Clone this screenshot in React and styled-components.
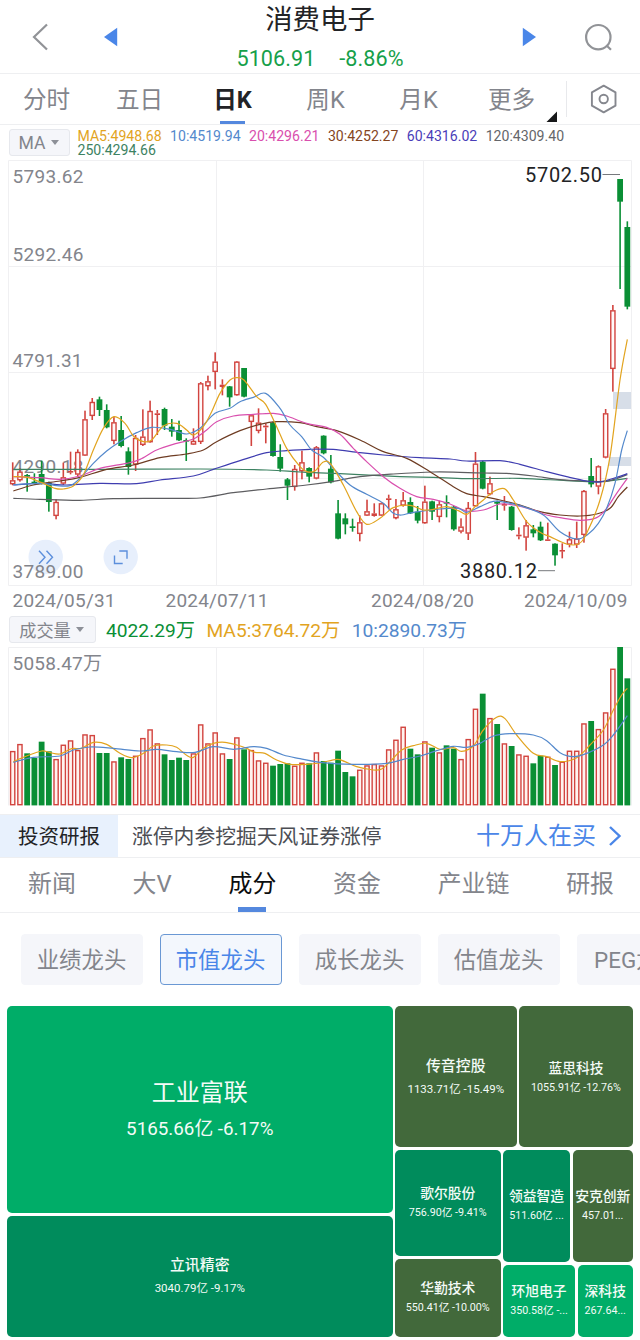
import React from "react";
import styled, { createGlobalStyle } from "styled-components";

const GlobalStyle = createGlobalStyle`
  * { box-sizing: border-box; }
  body {
    margin: 0;
    background: #fff;
    font-family: Roboto, "Noto Sans CJK SC", sans-serif;
    color: #222326;
    overflow: hidden;
  }
`;

const RED = "#d2443f";
const GREEN = "#0a8f35";
const GREY = "#83858c";
const BLUE = "#4a86e8";
const LINE = "#eeeff1";

const Page = styled.main`
  width: 640px;
  height: 1340px;
  overflow: hidden;
  display: flex;
  flex-direction: column;
  background: #fff;
  white-space: nowrap;
`;

/* ---------- header ---------- */
const Header = styled.header`
  height: 74px;
  flex: none;
  display: flex;
  align-items: center;
  border-bottom: 1px solid ${LINE};
`;
const HeaderIcon = styled.svg`
  flex: none;
  display: block;
  width: ${(p) => p.$w}px;
  height: 72px;
`;
const Heading = styled.div`
  flex: 1;
  height: 73px;
  display: flex;
  flex-direction: column;
  align-items: center;
`;
const Title = styled.h1`
  margin: 0;
  font-size: 27.4px;
  line-height: 41px;
  font-weight: 400;
`;
const Quote = styled.div`
  display: flex;
  gap: 24px;
  padding-top: 4px;
  font-size: 21.6px;
  line-height: 28px;
  letter-spacing: 0.05px;
  color: #16a04a;
`;

/* ---------- period tabs ---------- */
const Periods = styled.nav`
  height: 51px;
  flex: none;
  display: flex;
  border-bottom: 1px solid ${LINE};
`;
const Period = styled.div`
  width: 93px;
  display: flex;
  flex-direction: column;
  align-items: center;
  justify-content: space-between;
  font-size: 23.6px;
  line-height: 47px;
  padding-top: 2.6px;
  height: 50px;
  font-weight: ${(p) => (p.$active ? 700 : 400)};
  color: ${(p) => (p.$active ? "#222326" : GREY)};
  &::after {
    content: "";
    width: 25px;
    height: 3px;
    flex: none;
    margin-top: -2.6px;
    background: ${(p) => (p.$active ? "#5488de" : "transparent")};
  }
`;
const PeriodTools = styled.svg`
  display: block;
  width: 96px;
  height: 50px;
  margin-left: -14px;
`;

/* ---------- indicator legends ---------- */
const Legend = styled.div`
  height: ${(p) => p.$h}px;
  flex: none;
  display: flex;
  align-items: flex-start;
  padding: ${(p) => p.$pad};
  gap: ${(p) => p.$gap}px;
`;
const Picker = styled.button`
  flex: none;
  width: ${(p) => p.$w}px;
  height: 27px;
  padding: 0 2px 0 0;
  display: flex;
  align-items: center;
  justify-content: center;
  gap: 5px;
  border: 1px solid #e6e8ed;
  border-radius: 3px;
  background: #f5f6fa;
  font: ${(p) => p.$size}px Roboto, "Noto Sans CJK SC", sans-serif;
  color: ${GREY};
  &::after {
    content: "";
    border: 4.5px solid transparent;
    border-top: 5px solid #8d9098;
    border-bottom: 0;
  }
`;
const Averages = styled.div`
  flex: 1;
  display: flex;
  flex-wrap: wrap;
  column-gap: ${(p) => p.$gap}px;
  font-size: ${(p) => p.$size}px;
  line-height: ${(p) => p.$lh}px;
`;
const Average = styled.span`
  color: ${(p) => p.$c};
`;

const Chart = styled.svg`
  display: block;
  flex: none;
  width: 640px;
  height: ${(p) => p.$h}px;
  font-size: 19px;
`;

/* ---------- promo strip ---------- */
const Promo = styled.section`
  height: 44px;
  flex: none;
  display: flex;
  align-items: stretch;
  border-top: 1px solid ${LINE};
  border-bottom: 1px solid ${LINE};
  line-height: 43px;
`;
const PromoTag = styled.div`
  width: 118px;
  padding-top: 1px;
  text-align: center;
  background: #e8f1fd;
  font-size: 20.5px;
`;
const PromoText = styled.div`
  flex: 1;
  padding: 1px 0 0 14px;
  font-size: 20.8px;
  color: #4c4e54;
`;
const PromoLink = styled.div`
  display: flex;
  align-items: center;
  gap: 12px;
  padding-right: 18px;
  font-size: 24px;
  line-height: 40px;
  color: ${BLUE};
`;

/* ---------- section tabs ---------- */
const Sections = styled.nav`
  height: 55px;
  flex: none;
  display: flex;
  justify-content: space-between;
  padding: 0 26px 0 28px;
  border-bottom: 1px solid ${LINE};
`;
const Section = styled.div`
  display: flex;
  flex-direction: column;
  align-items: center;
  justify-content: space-between;
  font-size: 23.9px;
  line-height: 49px;
  padding-top: 1.5px;
  height: 54px;
  color: ${(p) => (p.$active ? "#0c0d0e" : GREY)};
  &::after {
    content: "";
    width: 28px;
    height: 5px;
    flex: none;
    margin-top: -1.5px;
    background: ${(p) => (p.$active ? "#5488de" : "transparent")};
  }
`;

/* ---------- filter chips ---------- */
const Chips = styled.div`
  height: 93px;
  flex: none;
  display: flex;
  gap: 17px;
  padding: 21px 0 0 21px;
  overflow: hidden;
`;
const Chip = styled.div`
  flex: none;
  width: 122px;
  height: 51px;
  padding-right: 1px;
  text-align: center;
  font-size: 22.4px;
  line-height: 51px;
  border-radius: 4px;
  border: 1px solid ${(p) => (p.$active ? "#6a98d4" : "#f5f6fa")};
  background: ${(p) => (p.$active ? "#f3f7fd" : "#f5f6fa")};
  color: ${(p) => (p.$active ? BLUE : GREY)};
`;

/* ---------- heat map ---------- */
const HeatMap = styled.section`
  flex: none;
  height: 330.5px;
  margin: 0 7px;
  display: flex;
  gap: 2.5px;
`;
const Column = styled.div`
  display: flex;
  flex-direction: column;
  gap: 2.5px;
  ${(p) => (p.$w ? `width: ${p.$w}px; flex: none;` : "flex: 1; min-width: 0;")}
`;
const Row = styled.div`
  display: flex;
  gap: 2.5px;
  ${(p) => (p.$h ? `height: ${p.$h}px; flex: none;` : "flex: 1; min-height: 0;")}
`;
const tones = { light: "#00ad68", mid: "#008c5c", dark: "#42693b" };
const TileBox = styled.div`
  ${(p) => (p.$w ? `width: ${p.$w}px;` : "")}
  ${(p) => (p.$h ? `height: ${p.$h}px;` : "")}
  flex: ${(p) => (p.$w || p.$h ? "none" : 1)};
  min-width: 0;
  display: flex;
  flex-direction: column;
  align-items: center;
  justify-content: center;
  overflow: hidden;
  border-radius: 5px;
  padding-top: ${(p) => p.$drop}px;
  background: ${(p) => tones[p.$tone]};
  color: #f4fbf7;
`;
const TileName = styled.div`
  font-size: ${(p) => p.$size}px;
  line-height: ${(p) => p.$size * 1.45}px;
  font-weight: ${(p) => (p.$size > 20 ? 400 : 500)};
`;
const TileInfo = styled.div`
  font-size: ${(p) => p.$size}px;
  line-height: ${(p) => p.$size * 1.95}px;
`;

function Tile({ name, info, tone, w, h, size = 13.8, small = 10.7, drop = 2 }) {
  return (
    <TileBox $tone={tone} $w={w} $h={h} $drop={drop}>
      <TileName $size={size}>{name}</TileName>
      <TileInfo $size={small}>{info}</TileInfo>
    </TileBox>
  );
}

/* ---------- chart data ----------
   Each candle: direction, high, body top, body bottom, low, volume top.
   Values are in thirds of a pixel. */
const candles = [
  ["r", 367, 421, 432, 436, 423], ["r", 385, 395, 420, 425, 402], ["g", 402, 405, 410, 455, 430],
  ["g", 400, 425, 432, 433, 444], ["g", 362, 402, 428, 433, 395], ["g", 425, 428, 486, 515, 424],
  ["r", 478, 486, 527, 538, 447], ["r", 368, 412, 430, 435, 404], ["r", 335, 393, 397, 403, 391],
  ["r", 328, 336, 403, 410, 420], ["r", 212, 238, 346, 348, 373], ["r", 174, 186, 227, 240, 375],
  ["g", 170, 178, 210, 228, 429], ["g", 193, 210, 262, 265, 429], ["r", 230, 247, 302, 313, 454],
  ["g", 228, 270, 318, 322, 442], ["g", 322, 334, 381, 404, 447], ["r", 285, 294, 373, 393, 437],
  ["r", 208, 290, 314, 318, 384], ["r", 182, 213, 306, 308, 358], ["r", 210, 220, 225, 285, 400],
  ["g", 203, 207, 257, 270, 433], ["g", 237, 260, 275, 290, 450], ["g", 242, 270, 301, 303, 443],
  ["g", 295, 300, 303, 363, 450], ["r", 265, 303, 313, 315, 430], ["r", 126, 130, 305, 312, 343],
  ["r", 107, 124, 138, 151, 400], ["r", 37, 65, 95, 148, 367], ["r", 118, 134, 141, 166, 430],
  ["g", 138, 139, 172, 200, 447], ["r", 63, 65, 165, 167, 382], ["g", 84, 84, 170, 172, 418],
  ["r", 222, 226, 245, 318, 420], ["r", 205, 248, 272, 280, 451], ["r", 250, 257, 262, 310, 458],
  ["g", 245, 248, 348, 350, 467], ["g", 313, 351, 386, 395, 462], ["g", 414, 418, 437, 480, 460],
  ["r", 375, 387, 440, 452, 467], ["r", 332, 367, 393, 418, 458], ["g", 382, 384, 410, 427, 460],
  ["r", 318, 322, 415, 418, 427], ["g", 286, 287, 340, 343, 453], ["g", 345, 386, 427, 430, 458],
  ["g", 480, 520, 596, 598, 422], ["g", 520, 535, 553, 583, 486], ["g", 536, 559, 564, 575, 499],
  ["r", 526, 547, 581, 604, 479], ["r", 479, 514, 526, 528, 466], ["r", 490, 520, 528, 530, 462],
  ["r", 487, 490, 526, 528, 466], ["r", 464, 475, 480, 508, 418], ["r", 477, 508, 534, 538, 389],
  ["r", 456, 481, 496, 500, 350], ["g", 472, 486, 520, 522, 416], ["g", 498, 515, 542, 550, 433],
  ["r", 437, 485, 549, 551, 394], ["g", 482, 484, 515, 540, 413], ["r", 482, 493, 530, 547, 427],
  ["g", 466, 486, 491, 532, 406], ["g", 498, 500, 568, 572, 416], ["r", 535, 560, 574, 580, 447],
  ["r", 486, 504, 580, 600, 387], ["r", 336, 371, 498, 500, 296], ["g", 362, 365, 446, 448, 251],
  ["r", 410, 430, 462, 466, 324], ["g", 482, 486, 491, 540, 342], ["r", 468, 492, 497, 512, 400],
  ["g", 498, 500, 570, 572, 408], ["r", 562, 584, 589, 598, 433], ["r", 540, 556, 592, 632, 437],
  ["g", 555, 568, 580, 592, 460], ["g", 545, 560, 601, 603, 437], ["r", 548, 598, 602, 603, 440],
  ["g", 610, 611, 646, 677, 465], ["r", 610, 630, 634, 655, 455], ["r", 575, 598, 613, 622, 422],
  ["r", 545, 596, 613, 624, 422], ["r", 450, 453, 584, 608, 340], ["g", 354, 408, 433, 442, 333],
  ["r", 376, 379, 439, 463, 357], ["r", 207, 220, 352, 355, 307], ["r", -105, -89, 86, 155, 176],
  ["g", -483, -483, -415, -153, 111], ["g", -356, -339, -100, -92, 205],
];

const priceLines = [
  ["#3d8262", [40,388,300,388,600,387,800,390,900,396,1020,401,1200,410,1300,412,1400,416,1560,415,1700,422,1800,425,1882,415]],
  ["#5d5d60", [40,475,120,478,240,481,340,476,480,475,600,474,700,458,800,447,920,435,1000,424,1080,410,1180,402,1300,396,1380,397,1450,399,1520,400,1600,408,1680,419,1760,423,1820,424,1882,404]],
  ["#3f3db0", [40,435,120,430,200,435,300,430,410,431,480,420,580,408,640,388,720,362,800,338,860,332,930,328,1000,328,1080,338,1150,345,1260,353,1350,357,1400,363,1500,362,1560,373,1640,395,1700,410,1760,423,1800,426,1850,412,1882,401]],
  ["#6e3c23", [40,453,100,435,180,423,240,412,320,388,400,375,480,353,560,342,610,330,650,305,720,272,780,253,830,245,900,248,950,260,1010,272,1080,300,1150,335,1220,355,1290,395,1360,440,1400,461,1450,470,1500,480,1560,495,1620,515,1680,525,1740,528,1790,522,1830,505,1855,470,1882,441]],
  ["#d94fae", [40,410,120,413,180,418,240,408,300,385,380,370,420,358,470,330,530,310,580,297,620,270,650,245,700,228,760,223,820,220,860,228,920,250,980,262,1020,283,1060,325,1100,365,1150,410,1200,445,1250,470,1300,478,1350,492,1400,513,1450,510,1500,492,1540,495,1600,510,1640,525,1680,533,1740,541,1790,533,1820,505,1850,460,1882,415]],
  ["#5489cc", [40,434,125,430,170,437,210,437,240,415,280,370,320,333,360,305,410,278,455,262,510,268,560,282,600,265,645,220,690,205,720,185,760,172,797,160,840,205,870,255,905,290,935,330,970,352,1000,385,1050,435,1100,463,1150,490,1180,520,1205,525,1240,517,1320,507,1375,505,1400,517,1440,500,1480,484,1520,488,1570,500,1630,525,1680,575,1730,597,1765,582,1795,550,1820,505,1845,430,1865,330,1882,272]],
  ["#e2a41f", [40,410,82,412,125,428,165,445,190,447,220,438,250,405,280,330,310,265,342,230,375,250,400,288,430,305,455,300,490,258,530,250,560,270,581,285,612,257,635,215,660,160,690,120,710,113,732,120,770,170,797,193,830,260,860,325,900,380,920,395,945,393,970,366,992,372,1030,435,1070,515,1100,553,1140,535,1180,503,1230,496,1270,510,1300,508,1340,500,1375,512,1400,523,1425,500,1450,480,1480,455,1513,446,1540,480,1580,545,1620,577,1650,590,1700,612,1735,612,1760,580,1800,480,1830,350,1860,120,1882,-2]],
];

const volumeLines = [
  ["#e2a41f", [40,455,80,438,125,423,150,428,180,432,215,416,245,415,280,397,320,403,360,430,395,443,430,430,460,408,500,405,530,412,560,436,580,442,610,415,640,400,675,397,710,405,740,415,765,427,795,430,830,450,870,463,920,463,960,459,1010,448,1035,455,1070,470,1120,480,1145,477,1170,455,1205,420,1240,407,1280,400,1320,418,1360,413,1385,424,1420,408,1450,360,1490,322,1515,326,1550,375,1600,430,1640,440,1680,455,1730,443,1770,405,1810,360,1840,300,1865,255,1882,235]],
  ["#5489cc", [40,457,100,442,180,438,220,420,270,411,340,415,420,423,470,418,530,425,585,427,640,410,700,418,760,410,800,415,850,435,900,446,960,457,1060,463,1160,460,1210,448,1260,438,1310,422,1360,409,1400,412,1440,400,1480,378,1530,371,1600,375,1640,392,1680,428,1720,440,1760,430,1810,405,1840,375,1882,317]],
];

const xAt = (i) => 12.7 + i * 7.231;

/* Catmull-Rom curve through flat x,y pairs */
function curve(flat, dy) {
  const pts = [];
  for (let i = 0; i < flat.length; i += 2) pts.push([flat[i] / 3, flat[i + 1] / 3 + dy]);
  const f = (n) => n.toFixed(2);
  let d = `M${f(pts[0][0])} ${f(pts[0][1])}`;
  for (let i = 0; i < pts.length - 1; i++) {
    const a = pts[i - 1] || pts[i];
    const b = pts[i];
    const c = pts[i + 1];
    const e = pts[i + 2] || c;
    d += `C${f(b[0] + (c[0] - a[0]) / 6)} ${f(b[1] + (c[1] - a[1]) / 6)} ${f(c[0] - (e[0] - b[0]) / 6)} ${f(c[1] - (e[1] - b[1]) / 6)} ${f(c[0])} ${f(c[1])}`;
  }
  return d;
}

function Candle({ x, data }) {
  const [dir, high, top, bottom, low] = data;
  const y = (v) => 180 + v / 3;
  const h = Math.max((bottom - top) / 3, 1.6);
  if (dir === "g") {
    return (
      <g fill={GREEN}>
        <rect x={x - 0.8} y={y(high)} width="1.6" height={(low - high) / 3} />
        <rect x={x - 2.9} y={y(top)} width="5.8" height={h} />
      </g>
    );
  }
  return (
    <g fill={RED}>
      <rect x={x - 0.8} y={y(high)} width="1.6" height={Math.max((top - high) / 3, 0)} />
      <rect x={x - 0.8} y={y(bottom)} width="1.6" height={Math.max((low - bottom) / 3, 0)} />
      {h < 3 ? (
        <rect x={x - 2.7} y={y(top)} width="5.4" height={h} />
      ) : (
        <rect x={x - 2.1} y={y(top) + 0.5} width="4.2" height={h - 0.8} fill="#fffafa" stroke={RED} strokeWidth="1.4" />
      )}
    </g>
  );
}

function PriceChart() {
  return (
    <Chart $h={455}>
      <g stroke="#f0f0f2" strokeWidth="1" fill="none">
        <path d="M8.5 .5H631.5V425.5H8.5ZM8.5 106.5H631M8.5 212.5H631M8.5 318.5H631M216.5 .5V425M423.5 .5V425" />
      </g>
      <g fill="#d7dee8">
        <rect x="613" y="232" width="18" height="17" />
        <rect x="609" y="297" width="22" height="9" />
      </g>
      <circle cx="45.7" cy="397" r="17.2" fill="#e7effc" />
      <circle cx="120.7" cy="397" r="17.2" fill="#e7effc" />
      <g fill="none" stroke="#5c8fdc" strokeWidth="1.4">
        <path d="M39 390.7l6 6.5-6 6.5M46.5 390.7l6 6.5-6 6.5" />
        <path d="M119.3 391h7.7v7.7M114.5 395.5v8h8.2" />
      </g>
      <g fill={GREY}>
        <text x="12.5" y="23.3" textLength="71">5793.62</text>
        <text x="12.5" y="101" textLength="71">5292.46</text>
        <text x="12.5" y="206.7" textLength="70">4791.31</text>
        <text x="12.5" y="312.7" textLength="71">4290.18</text>
        <text x="12.5" y="418.4" textLength="71">3789.00</text>
        <text x="12.5" y="447.4" textLength="103">2024/05/31</text>
        <text x="165.5" y="447.4" textLength="103">2024/07/11</text>
        <text x="371" y="447.4" textLength="103">2024/08/20</text>
        <text x="524" y="447.4" textLength="103.5">2024/10/09</text>
      </g>
      {candles.map((c, i) => (
        <Candle key={i} x={xAt(i)} data={c} />
      ))}
      <g fill="none" strokeWidth="1.2" strokeLinejoin="round">
        {priceLines.map(([color, pts]) => (
          <path key={color} d={curve(pts, 180)} stroke={color} />
        ))}
      </g>
      <path d="M602.5 14.5H620M538 410.7H555" stroke="#77797d" strokeWidth="1" />
      <g fill="#222326" fontSize="20">
        <text x="525" y="22.3" textLength="77">5702.50</text>
        <text x="460" y="418.4" textLength="77">3880.12</text>
      </g>
    </Chart>
  );
}

function VolumeChart() {
  return (
    <Chart $h={167}>
      <path d="M8.5 158.5V.5H631.5V158.5M216.5 .5V158M423.5 .5V158" stroke="#f0f0f2" fill="none" />
      <text x="12.5" y="23.3" fill={GREY} textLength="89.5">5058.47万</text>
      {candles.map((c, i) => {
        const x = xAt(i);
        const y = c[5] / 3 - 37;
        return c[0] === "g" ? (
          <rect key={i} x={x - 2.9} y={y} width="5.8" height={158.4 - y} fill={GREEN} />
        ) : (
          <rect key={i} x={x - 2.1} y={y + 0.6} width="4.2" height={157.1 - y} fill="#fff3ef" stroke={RED} strokeWidth="1.4" />
        );
      })}
      <g fill="none" strokeWidth="1.2">
        {volumeLines.map(([color, pts]) => (
          <path key={color} d={curve(pts, -37)} stroke={color} />
        ))}
      </g>
    </Chart>
  );
}

const periods = ["分时", "五日", "日K", "周K", "月K", "更多"];
const sections = ["新闻", "大V", "成分", "资金", "产业链", "研报"];
const chips = ["业绩龙头", "市值龙头", "成长龙头", "估值龙头", "PEG龙头"];
const priceAverages = [
  ["#e2a41f", "MA5:4948.68"],
  ["#5489cc", "10:4519.94"],
  ["#d94fae", "20:4296.21"],
  ["#84451f", "30:4252.27"],
  ["#4a3db8", "60:4316.02"],
  ["#65666a", "120:4309.40"],
  ["#3d8262", "250:4294.66"],
];
const volumeAverages = [
  [GREEN, "4022.29万"],
  ["#e2a41f", "MA5:3764.72万"],
  ["#5489cc", "10:2890.73万"],
];

export default function App() {
  return (
    <Page>
      <GlobalStyle />
      <Header>
        <HeaderIcon $w={130} viewBox="0 0 130 72">
          <path d="M47 23.5L34 36l13 12.5" fill="none" stroke="#919397" strokeWidth="2.2" />
          <path d="M104 36l13.2-9.2v18.4z" fill={BLUE} />
        </HeaderIcon>
        <Heading>
          <Title>消费电子</Title>
          <Quote>
            <span>5106.91</span>
            <span>-8.86%</span>
          </Quote>
        </Heading>
        <HeaderIcon $w={130} viewBox="0 0 130 72">
          <path d="M26 36l-13.2-9.2v18.4z" fill={BLUE} />
          <g fill="none" stroke="#919397" strokeWidth="2.2">
            <circle cx="88.3" cy="36.2" r="12.2" />
            <path d="M96.5 44.5l4.5 4.2" />
          </g>
        </HeaderIcon>
      </Header>

      <Periods>
        {periods.map((p) => (
          <Period key={p} $active={p === "日K"}>{p}</Period>
        ))}
        <PeriodTools viewBox="0 0 96 50">
          <path d="M13 37.5V48H2.5z" fill="#17181a" />
          <path d="M22.5 7v36" stroke="#e8e9ec" />
          <g fill="none" stroke="#85878e" strokeWidth="1.9" strokeLinejoin="round">
            <path d="M59.7 11.7l11.8 6.6v13.4l-11.8 6.7-11.8-6.7V18.3z" />
            <circle cx="59.7" cy="25" r="4.2" />
          </g>
        </PeriodTools>
      </Periods>

      <Legend $h={35} $pad="4px 0 0 9px" $gap={7.5}>
        <Picker $w={61} $size={17.6}>MA</Picker>
        <Averages $gap={8.4} $size={14.1} $lh={14}>
          {priceAverages.map(([c, t]) => (
            <Average key={t} $c={c}>{t}</Average>
          ))}
        </Averages>
      </Legend>
      <PriceChart />

      <Legend $h={32} $pad="1px 0 0 9px" $gap={10}>
        <Picker $w={87} $size={17.2}>成交量</Picker>
        <Averages $gap={11.5} $size={19.2} $lh={29}>
          {volumeAverages.map(([c, t]) => (
            <Average key={t} $c={c}>{t}</Average>
          ))}
        </Averages>
      </Legend>
      <VolumeChart />

      <Promo>
        <PromoTag>投资研报</PromoTag>
        <PromoText>涨停内参挖掘天风证券涨停</PromoText>
        <PromoLink>
          十万人在买
          <svg width="14" height="22" viewBox="0 0 14 22">
            <path d="M2 2l9.5 9L2 20" fill="none" stroke={BLUE} strokeWidth="2.4" />
          </svg>
        </PromoLink>
      </Promo>

      <Sections>
        {sections.map((s) => (
          <Section key={s} $active={s === "成分"}>{s}</Section>
        ))}
      </Sections>

      <Chips>
        {chips.map((c) => (
          <Chip key={c} $active={c === "市值龙头"}>{c}</Chip>
        ))}
      </Chips>

      <HeatMap>
        <Column $w={385.5}>
          <Tile name="工业富联" info="5165.66亿 -6.17%" tone="light" h={207} size={24} small={18.8} drop={5} />
          <Tile name="立讯精密" info="3040.79亿 -9.17%" tone="mid" size={14.9} small={11.5} drop={3} />
        </Column>
        <Column>
          <Row $h={141}>
            <Tile name="传音控股" info="1133.71亿 -15.49%" tone="dark" w={121.5} size={14.9} small={11.5} drop={3} />
            <Tile name="蓝思科技" info="1055.91亿 -12.76%" tone="dark" drop={3} />
          </Row>
          <Row>
            <Column $w={105.5}>
              <Tile name="歌尔股份" info="756.90亿 -9.41%" tone="mid" h={106.5} />
              <Tile name="华勤技术" info="550.41亿 -10.00%" tone="dark" />
            </Column>
            <Column>
              <Row $h={112.5}>
                <Tile name="领益智造" info="511.60亿 ..." tone="mid" w={67} />
                <Tile name="安克创新" info="457.01..." tone="dark" />
              </Row>
              <Row>
                <Tile name="环旭电子" info="350.58亿 -..." tone="light" w={72} />
                <Tile name="深科技" info="267.64..." tone="light" />
              </Row>
            </Column>
          </Row>
        </Column>
      </HeatMap>
    </Page>
  );
}
